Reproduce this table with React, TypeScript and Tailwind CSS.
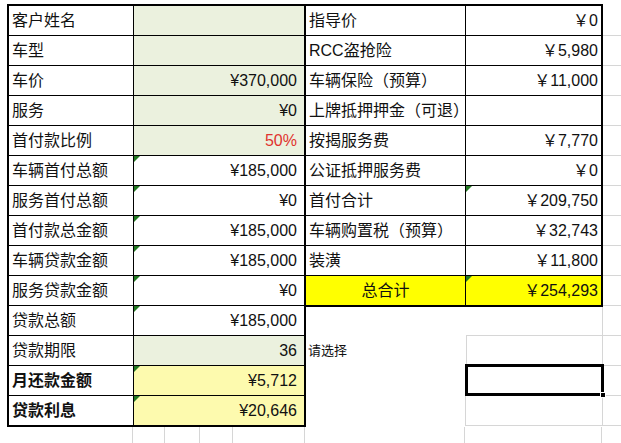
import React from 'react'

type Row = {
  label: string
  value: string
  bg?: string
  tri?: boolean
  bold?: boolean
  red?: boolean
  center?: boolean
}

const green = 'bg-[#ebf1de]'
const paleYellow = 'bg-[#fdfaae]'

const leftRows: Row[] = [
  { label: '客户姓名', value: '', bg: green },
  { label: '车型', value: '', bg: green },
  { label: '车价', value: '¥370,000', bg: green },
  { label: '服务', value: '¥0', bg: green },
  { label: '首付款比例', value: '50%', bg: green, red: true },
  { label: '车辆首付总额', value: '¥185,000', tri: true },
  { label: '服务首付总额', value: '¥0', tri: true },
  { label: '首付款总金额', value: '¥185,000', tri: true },
  { label: '车辆贷款金额', value: '¥185,000', tri: true },
  { label: '服务贷款金额', value: '¥0', tri: true },
  { label: '贷款总额', value: '¥185,000', tri: true },
  { label: '贷款期限', value: '36', bg: green },
  { label: '月还款金额', value: '¥5,712', bg: paleYellow, tri: true, bold: true },
  { label: '贷款利息', value: '¥20,646', bg: paleYellow, tri: true, bold: true },
]

const rightRows: Row[] = [
  { label: '指导价', value: '￥0' },
  { label: 'RCC盗抢险', value: '￥5,980' },
  { label: '车辆保险（预算）', value: '￥11,000' },
  { label: '上牌抵押押金（可退）', value: '' },
  { label: '按揭服务费', value: '￥7,770' },
  { label: '公证抵押服务费', value: '￥0' },
  { label: '首付合计', value: '￥209,750', tri: true },
  { label: '车辆购置税（预算）', value: '￥32,743' },
  { label: '装潢', value: '￥11,800' },
  { label: '总合计', value: '￥254,293', tri: true, center: true, bg: 'bg-[#ffff00]' },
]

function Tri() {
  return (
    <div className="absolute left-0 top-0 w-0 h-0 border-t-[6px] border-t-[#237a23] border-r-[6px] border-r-transparent" />
  )
}

function LeftTable() {
  return (
    <div className="w-[299px] border-2 border-black flex flex-col">
      {leftRows.map((r, i) => {
        const last = i === leftRows.length - 1
        return (
          <div key={i} className={`flex ${last ? 'h-[29px]' : 'h-[30px] border-b border-black'}`}>
            <div
              className={`w-[125px] border-r border-black flex items-center pl-[3px] whitespace-nowrap ${r.bold ? 'font-bold' : ''}`}
            >
              {r.label}
            </div>
            <div className={`relative w-[170px] flex items-center justify-end pr-[7px] ${r.bg ?? ''} ${r.red ? 'text-[#e0332e]' : ''}`}>
              {r.tri && <Tri />}
              {r.value}
            </div>
          </div>
        )
      })}
    </div>
  )
}

function RightTable() {
  return (
    <div className="w-[297px] border-y-2 border-r-2 border-black flex flex-col">
      {rightRows.map((r, i) => {
        const last = i === rightRows.length - 1
        return (
          <div key={i} className={`flex ${r.bg ?? ''} ${last ? 'h-[29px]' : 'h-[30px] border-b border-black'}`}>
            <div
              className={`w-[160px] border-r border-black flex items-center whitespace-nowrap ${r.center ? 'justify-center' : 'pl-[3px]'}`}
            >
              {r.label}
            </div>
            <div className="relative w-[135px] flex items-center justify-end pr-[3px]">
              {r.tri && <Tri />}
              {r.value}
            </div>
          </div>
        )
      })}
    </div>
  )
}

function BelowRight() {
  return (
    <div className="flex flex-col">
      <div className="flex h-[29px]">
        <div className="w-[160px]" />
        <div className="w-[137px] border-b border-r border-[#d6d6d6]" />
      </div>
      <div className="flex h-[30px]">
        <div className="w-[160px] flex items-center pl-[2px] text-[13px]">请选择</div>
        <div className="w-[137px] border-l border-b border-r border-[#d6d6d6]" />
      </div>
      <div className="flex h-[30px]">
        <div className="w-[159px]" />
        <div className="relative w-[138px] border-l border-b border-r border-[#d6d6d6]">
          <div className="absolute -left-[1px] -top-[2px] w-[139px] h-[32px] border-[3px] border-black" />
          <div className="absolute -right-[4px] -bottom-[3px] w-[6px] h-[6px] bg-black border border-white" />
        </div>
      </div>
      <div className="flex h-[30px]">
        <div className="w-[159px]" />
        <div className="w-[138px] border-l border-b border-r border-[#d6d6d6]" />
      </div>
    </div>
  )
}

function Gutter() {
  return (
    <div className="w-[18px] pt-[2px] flex flex-col">
      {Array.from({ length: 14 }).map((_, i) => (
        <div key={i} className="h-[30px] border-b border-[#d6d6d6]" />
      ))}
    </div>
  )
}

function BottomStrip() {
  const widths = [126, 32, 35, 33, 72, 160, 137]
  return (
    <div className="flex h-[20px] pl-[7px]">
      {widths.map((w, i) => (
        <div key={i} className="h-full border-r border-[#d6d6d6]" style={{ width: w }} />
      ))}
    </div>
  )
}

export default function App() {
  return (
    <div
      className="w-[621px] h-[443px] bg-white overflow-hidden text-[16px] text-[#111]"
      style={{ fontFamily: "'Liberation Sans', 'Noto Sans CJK SC', sans-serif" }}
    >
      <div className="flex pt-[4px] pl-[7px]">
        <LeftTable />
        <div className="flex flex-col">
          <RightTable />
          <BelowRight />
        </div>
        <Gutter />
      </div>
      <BottomStrip />
    </div>
  )
}
